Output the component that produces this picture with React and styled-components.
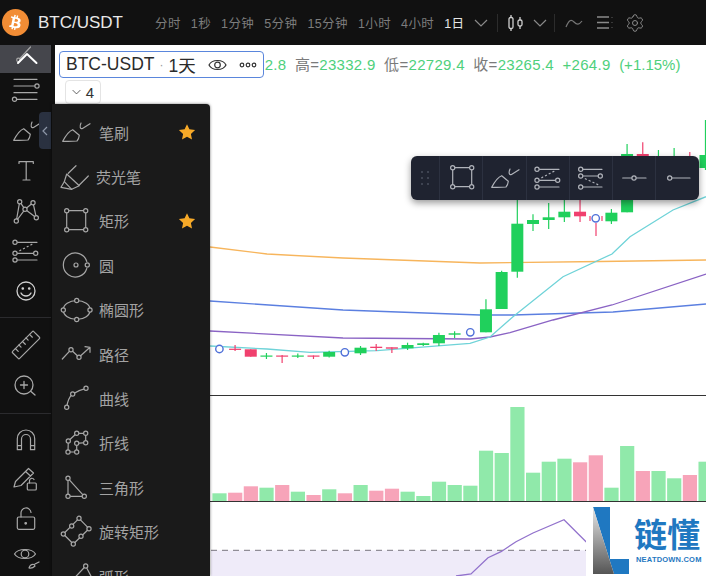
import styled, { createGlobalStyle } from 'styled-components';
import { FaBtc } from 'react-icons/fa';
import { Settings } from 'lucide-react';

const FONT = '"Liberation Sans", "Noto Sans CJK SC", sans-serif';
const GREEN = '#20d05c';
const RED = '#f0406e';

const GlobalStyle = createGlobalStyle`
  html, body { margin: 0; padding: 0; background: #fff; }
  * { box-sizing: border-box; }
`;

// x step shared by candles and volume bars
const stepX = (i) => 219.4 + 15.68 * i;

// [index, bodyTop, bodyBottom, wickTop, wickBottom, up]
const candles = [
  [1, 348.7, 349.9, 345, 351, 0],
  [2, 349.3, 356.7, 349.3, 356.7, 0],
  [3, 355.5, 356.7, 353, 359, 1],
  [4, 355.5, 356.7, 355, 363, 0],
  [5, 355.5, 356.7, 353.5, 358, 1],
  [6, 355.5, 356.7, 355.5, 359, 0],
  [7, 352, 356.7, 350.7, 357.5, 1],
  [9, 347.7, 353.3, 346, 355, 1],
  [10, 346.7, 348, 344, 351, 0],
  [11, 347.3, 348.7, 347.3, 353, 0],
  [12, 345, 348.3, 342.7, 350, 1],
  [13, 343.3, 345, 342.7, 346, 1],
  [14, 335, 343.3, 332.7, 346, 1],
  [15, 333.3, 334.7, 331.3, 338, 1],
  [17, 309.3, 332.3, 299.3, 332.3, 1],
  [18, 272, 309, 270.7, 309, 1],
  [19, 223.7, 271.7, 200, 277.7, 1],
  [20, 220, 224, 214.3, 231, 1],
  [21, 217.3, 220, 203, 229, 1],
  [22, 211.7, 217.3, 200, 222, 1],
  [23, 211.7, 216.3, 198, 222, 0],
  [25, 212.7, 221.3, 209, 224, 1],
  [26, 154, 212.3, 144, 212.3, 1],
  [27, 154, 157, 142.3, 165, 0],
  [28, 170, 175, 150, 180, 1],
  [29, 170, 175, 148, 180, 1],
  [30, 170, 175, 152, 180, 0],
  [31, 155, 168, 120, 170, 1],
];

const markers = [[0, 349], [8, 352.3], [16, 332.3], [24, 218.3]];

const lines = [
  { color: '#f7b55c', points: '210,247 267,254 343,258 480,263 600,261.5 706,260' },
  { color: '#5b7fe0', points: '210,301 343,310 480,315 513,315 613,312 706,304' },
  { color: '#8a63c4', points: '210,331 343,338 470,339 490,337 510,332.7 553,320 612,305 706,274' },
  { color: '#6fd3d8', points: '210,346 267,349 310,352.3 377,350.7 470,343.3 490,337 513,316.7 563,276.7 612,254 630,236.7 673,210 706,196.7' },
];

const volumes = [
  [7.7, 1], [8.3, 0], [14.7, 0], [13.3, 1], [16, 0], [9.3, 1], [6, 0], [11.7, 1],
  [7.7, 0], [16, 1], [10.3, 0], [12.3, 0], [9.3, 1], [5, 1], [19.3, 1], [16, 1],
  [15.3, 1], [50.3, 1], [48, 1], [94, 1], [28.3, 1], [39.3, 1], [42.3, 1], [38.7, 0],
  [45.7, 0], [13.3, 1], [55, 1], [30, 0], [30, 1], [22.7, 1], [26, 0], [39.3, 1],
];

const Page = styled.div`
  width: 706px;
  height: 576px;
  overflow: hidden;
  display: flex;
  flex-direction: column;
  font-family: ${FONT};
`;

const Header = styled.header`
  height: 45px;
  flex: none;
  background: #111;
  display: flex;
  align-items: center;
  padding-left: 2px;
`;

const Logo = styled.div`
  width: 27px;
  height: 27px;
  border-radius: 50%;
  background: #f28d35;
  color: #fff;
  display: flex;
  align-items: center;
  justify-content: center;
  font-size: 15px;
  svg { transform: rotate(12deg); }
`;

const Pair = styled.div`
  margin-left: 9px;
  width: 117px;
  font-size: 17px;
  color: #e8e8e8;
`;

const Tabs = styled.nav`
  display: flex;
  align-items: center;
  gap: 10px;
`;

const Tab = styled.span`
  font-size: 12.5px;
  letter-spacing: 0.4px;
  color: ${(p) => (p.$active ? '#e6e6e6' : '#7d7d7d')};
  white-space: nowrap;
`;

const HeadIcons = styled.div`
  display: flex;
  align-items: center;
  margin-left: 10px;
  color: #8a8a8a;
`;

const Sep = styled.i`
  width: 1px;
  height: 18px;
  background: #2c2c2c;
  margin: 0 ${(p) => p.$right || 10}px 0 ${(p) => p.$left || 10}px;
`;

const Body = styled.div`
  flex: 1;
  min-height: 0;
  display: flex;
  position: relative;
`;

const Sidebar = styled.aside`
  width: 55px;
  flex: none;
  background: #111;
  position: relative;
`;

const ToolGroup = styled.div`
  width: 51px;
  padding: ${(p) => p.$pad || '0'};
  border-bottom: ${(p) => (p.$line ? '1px solid #2b2b2e' : 'none')};
`;

const Tool = styled.div`
  height: ${(p) => p.$h || 40}px;
  display: flex;
  align-items: center;
  justify-content: center;
  background: ${(p) => (p.$active ? '#45464c' : 'transparent')};
  margin-bottom: ${(p) => p.$after || 0}px;
  overflow: visible;
`;

const Collapse = styled.div`
  position: absolute;
  left: 39px;
  top: 67px;
  width: 12px;
  height: 37px;
  background: #2a3140;
  border-radius: 4px 0 0 4px;
  display: flex;
  align-items: center;
  justify-content: center;
`;

const Menu = styled.div`
  position: absolute;
  left: 52px;
  top: 59px;
  bottom: 0;
  width: 158px;
  background: #1a1a1a;
  border-radius: 0 4px 0 0;
  box-shadow: 0 0 3px rgba(0, 0, 0, 0.55);
  padding: 6px 0 0 5px;
  overflow: hidden;
  z-index: 3;
`;

const MenuItem = styled.div`
  height: 44.4px;
  flex: none;
  display: flex;
  align-items: center;
  position: relative;
`;

const MenuLabel = styled.span`
  margin-left: ${(p) => p.$gap ?? 6}px;
  font-size: 15px;
  color: #a3a3a3;
  white-space: nowrap;
`;

const Star = styled.svg`
  position: absolute;
  left: 121px;
  top: 13px;
`;

const Chart = styled.main`
  flex: 1;
  min-width: 0;
  display: flex;
  flex-direction: column;
  position: relative;
  background: #fff;
`;

const Pane = styled.div`
  height: ${(p) => p.$h}px;
  flex: ${(p) => (p.$h ? 'none' : '1')};
  border-bottom: ${(p) => (p.$line ? '1.5px solid #333' : 'none')};
  overflow: hidden;
  svg { display: block; }
`;

const Legend = styled.div`
  position: absolute;
  left: 4px;
  top: 6px;
  display: flex;
  align-items: center;
  white-space: nowrap;
  z-index: 1;
`;

const TitleBox = styled.div`
  width: 205px;
  height: 27px;
  padding: 0 6px;
  background: #fff;
  border: 1.5px solid #5a86dc;
  border-radius: 4px;
  display: flex;
  align-items: center;
  font-size: 17.5px;
  color: #2b2b2b;
  position: relative;
  z-index: 1;
`;

const Dot = styled.span`
  margin: 0 5px;
  font-size: 12px;
  color: #999;
`;

const TitleIcons = styled.span`
  margin-left: auto;
  display: flex;
  align-items: center;
  gap: 12px;
`;

const Values = styled.div`
  display: flex;
  align-items: baseline;
  gap: 8.5px;
  margin-left: -8px;
  margin-top: 1px;
  font-size: 15px;
  line-height: 20px;
  letter-spacing: 0.3px;
`;

const Value = styled.span`
  color: #4ed07c;
  letter-spacing: ${(p) => (p.$tight ? '0' : 'inherit')};
`;

const Key = styled.span`
  color: #7a7a7a;
`;

const Collapsed = styled.div`
  position: absolute;
  left: 10px;
  top: 35px;
  width: 36px;
  height: 24px;
  border: 1px solid #e4e4e4;
  border-radius: 4px;
  background: #fff;
  display: flex;
  align-items: center;
  justify-content: center;
  gap: 5px;
  font-size: 15px;
  color: #333;
`;

const FloatBar = styled.div`
  position: absolute;
  left: 356px;
  top: 111px;
  height: 44px;
  display: flex;
  background: #1f2330;
  border-radius: 6px;
  box-shadow: 0 3px 7px rgba(0, 0, 0, 0.4);
  z-index: 2;
`;

const Handle = styled.div`
  width: 28px;
  display: grid;
  grid-template-columns: 2px 2px;
  grid-auto-rows: 2px;
  gap: 4px;
  align-content: center;
  justify-content: center;
  span { background: #4a4f5c; border-radius: 50%; }
`;

const BarCell = styled.div`
  width: 43.3px;
  border-left: 1px solid #2c3140;
  display: flex;
  align-items: center;
  justify-content: center;
`;

const Watermark = styled.div`
  position: absolute;
  right: 0;
  bottom: 0;
  width: 120px;
  height: 73px;
  background: #fff;
  display: flex;
  padding: 4px 0 2px 7px;
  z-index: 1;
`;

const Brand = styled.div`
  margin-left: 5px;
  display: flex;
  flex-direction: column;
  align-items: flex-start;
  color: #1f78c1;
`;

const BrandName = styled.div`
  margin-top: 11px;
  font-size: 33px;
  line-height: 36px;
  font-weight: 700;
  white-space: nowrap;
`;

const BrandUrl = styled.div`
  margin-left: 2px;
  font-size: 7.5px;
  line-height: 11px;
  font-weight: 700;
  letter-spacing: 0.2px;
  white-space: nowrap;
`;

const Icon = ({ children, color = '#a6a6a6', size = 36, width = 1.2 }) => (
  <svg width={size} height={size} viewBox="0 0 36 36" fill="none" stroke={color} strokeWidth={width} strokeLinecap="round" strokeLinejoin="round" style={{ flex: 'none' }}>
    {children}
  </svg>
);

// small open circle on a drawing tool, bg hides the line behind it
const N = ({ x, y, r = 2.1, bg = '#1a1a1a' }) => <circle cx={x} cy={y} r={r} fill={bg} />;

const BrushIcon = ({ bg, ...p }) => (
  <Icon {...p}>
    <path d="M5.7 27.3C9 21 12 17 15.7 15.7L22.3 21.3C22 24 21 26 20 27C15 27.5 10 27.5 5.7 27.3Z" />
    <path d="M24 9C22.5 12.5 23 15.5 25.5 14.5L33 9.7" />
  </Icon>
);

const RectIcon = ({ bg, ...p }) => (
  <Icon {...p}>
    <rect x="9.7" y="7.7" width="19" height="19" />
    <N x={9.7} y={7.7} bg={bg} /><N x={28.7} y={7.7} bg={bg} /><N x={9.7} y={26.7} bg={bg} /><N x={28.7} y={26.7} bg={bg} />
  </Icon>
);

const ChannelIcon = ({ bg, ...p }) => (
  <Icon {...p}>
    <path d="M7 9.3H29M7 20.3H27.7M7 27H29" />
    <path d="M11.7 17.7L24 11.3" strokeDasharray="1.2 3" />
    <N x={7} y={9.3} bg={bg} /><N x={7} y={20.3} bg={bg} /><N x={27.7} y={20.3} bg={bg} /><N x={7} y={27} bg={bg} />
  </Icon>
);

const FibIcon = ({ bg, ...p }) => (
  <Icon {...p}>
    <path d="M7.7 9.3H29M7.7 16H27.3M7.7 27H29" />
    <path d="M12.3 18.7L25 24.7" strokeDasharray="1.2 3" />
    <N x={7.7} y={9.3} bg={bg} /><N x={7.7} y={16} bg={bg} /><N x={27.3} y={16} bg={bg} /><N x={7.7} y={27} bg={bg} />
  </Icon>
);

const menuIcons = {
  brush: <BrushIcon />,
  marker: (
    <Icon>
      <path d="M19 6.7L11.3 14.3M9.7 15L22.3 26.7L14.7 30.3L4 28.3L7.3 22.7Z" />
      <path d="M7.3 22.7L14.7 30.3M22.3 26L31.3 17" />
    </Icon>
  ),
  rect: <RectIcon />,
  circle: (
    <Icon>
      <path d="M29.8 14.5A12 12 0 1 0 29.8 21.5" />
      <circle cx="19" cy="18" r="2" />
      <N x={30.3} y={18} />
    </Icon>
  ),
  ellipse: (
    <Icon>
      <ellipse cx="19.7" cy="18" rx="13.5" ry="9.5" />
      <N x={19.7} y={8.5} /><N x={19.7} y={27.5} /><N x={6.3} y={18} /><N x={33} y={18} />
    </Icon>
  ),
  path: (
    <Icon>
      <path d="M5.3 23L14 13.7L22 21.3L33 11.3M28 10.7L33 11.3V16.3" />
      <N x={14} y={13.7} /><N x={22} y={21.3} />
    </Icon>
  ),
  curve: (
    <Icon>
      <path d="M9.7 26.3C10.5 20 12 16 15.7 13C20 10 24 8.5 29 7.3" />
      <N x={9.7} y={26.3} /><N x={15.7} y={13} /><N x={29} y={7.3} />
    </Icon>
  ),
  polyline: (
    <Icon>
      <path d="M11 27L11.3 16L19.7 8.3H28.7V17.7L19.7 18.3V27H11" />
      <N x={11} y={27} /><N x={11.3} y={16} /><N x={19.7} y={8.3} /><N x={28.7} y={8.3} /><N x={28.7} y={17.7} /><N x={19.7} y={18.3} /><N x={19.7} y={27} />
    </Icon>
  ),
  triangle: (
    <Icon>
      <path d="M11 9.3V27.3H27.3Z" />
      <N x={11} y={9.3} /><N x={11} y={27.3} /><N x={27.3} y={27.3} />
    </Icon>
  ),
  rotated: (
    <Icon>
      <path d="M22 4.3L6.3 20L16.3 30L32 14.7Z" />
      <N x={22} y={4.3} /><N x={6.3} y={20} /><N x={16.3} y={30} /><N x={32} y={14.7} /><N x={14.7} y={12} /><N x={24} y={22.3} />
    </Icon>
  ),
  arc: (
    <Icon>
      <path d="M8 30L28.7 8L36 22" />
      <N x={28.7} y={8} />
    </Icon>
  ),
};

const menuItems = [
  { label: '笔刷', icon: 'brush', star: true },
  { label: '荧光笔', icon: 'marker', gap: 3 },
  { label: '矩形', icon: 'rect', star: true },
  { label: '圆', icon: 'circle' },
  { label: '椭圆形', icon: 'ellipse' },
  { label: '路径', icon: 'path' },
  { label: '曲线', icon: 'curve' },
  { label: '折线', icon: 'polyline' },
  { label: '三角形', icon: 'triangle' },
  { label: '旋转矩形', icon: 'rotated' },
  { label: '弧形', icon: 'arc' },
];

const tabs = ['分时', '1秒', '1分钟', '5分钟', '15分钟', '1小时', '4小时'];

const Chevron = ({ w = 14, color = '#8a8a8a' }) => (
  <svg width={w} height="8" viewBox="0 0 14 8" fill="none" stroke={color} strokeWidth="1.2">
    <path d="M1 1L7 7L13 1" />
  </svg>
);

const SideIcon = ({ children, ...p }) => <Icon color="#a8a8a8" {...p}>{children}</Icon>;

const MainChart = () => (
  <svg width="651" height="350" viewBox="55 45 651 350">
    {lines.map((l) => (
      <polyline key={l.color} points={l.points} fill="none" stroke={l.color} strokeWidth="1.3" />
    ))}
    {candles.map(([i, top, bottom, wTop, wBottom, up]) => {
      const x = stepX(i);
      const c = up ? GREEN : RED;
      return (
        <g key={i}>
          <line x1={x} x2={x} y1={wTop} y2={wBottom} stroke={c} strokeWidth="1.2" />
          <rect x={x - 6} y={top} width="12" height={bottom - top} fill={c} />
        </g>
      );
    })}
    <path d="M596 223V236M590 216V221M602 216V221" stroke={RED} strokeWidth="1.2" />
    {markers.map(([i, y]) => (
      <circle key={i} cx={stepX(i)} cy={y} r="3.7" fill="#fff" stroke="#4f70d8" strokeWidth="1.4" />
    ))}
  </svg>
);

const VolumeChart = () => (
  <svg width="651" height="105" viewBox="55 396 651 105">
    {volumes.map(([h, up], i) => (
      <rect key={i} x={stepX(i) - 7} y={501 - h} width="14.2" height={h} fill={up ? '#90e9aa' : '#f7a4b9'} />
    ))}
  </svg>
);

const RsiChart = () => (
  <svg width="651" height="74" viewBox="55 502 651 74">
    <rect x="211" y="550.3" width="495" height="26" fill="#efebf9" />
    <line x1="211" x2="706" y1="550.3" y2="550.3" stroke="#77757f" strokeWidth="1" strokeDasharray="6 5" />
    <polyline points="456,576 471,574 488,557.7 501,551.7 516,541.7 533,533 564,519.7 586,541.7 600,552" fill="none" stroke="#9272cc" strokeWidth="1.3" />
  </svg>
);

const App = () => (
  <Page>
    <GlobalStyle />
    <Header>
      <Logo><FaBtc /></Logo>
      <Pair>BTC/USDT</Pair>
      <Tabs>
        {tabs.map((t) => <Tab key={t}>{t}</Tab>)}
        <Tab $active>1日</Tab>
      </Tabs>
      <HeadIcons>
        <Chevron />
        <Sep $left={9} />
        <svg width="15" height="18" viewBox="0 0 15 18" fill="none" stroke="#d0d0d0" strokeWidth="1.3">
          <rect x="1" y="3.5" width="4" height="11" rx="1.5" />
          <path d="M3 1V3.5M3 14.5V17M12 3V6M12 12V15" />
          <rect x="10" y="6" width="4" height="6" rx="1.5" />
        </svg>
        <span style={{ width: 10 }} />
        <Chevron />
        <Sep $left={7} $right={8} />
        <svg width="18" height="10" viewBox="0 0 18 10" fill="none" stroke="#777" strokeWidth="1.2" style={{ marginLeft: 2 }}>
          <path d="M1 9C4 2 6 1 9 4C12 7 14 7 17 3" />
        </svg>
        <span style={{ width: 14 }} />
        <svg width="16" height="13" viewBox="0 0 16 13" fill="none" stroke="#8a8a8a" strokeWidth="1.3">
          <path d="M0 1H12M0 6.5H12M0 12H12M15 1V1.6M15 6.2V6.8M15 11.4V12" />
        </svg>
        <span style={{ width: 12 }} />
        <Settings size={20} strokeWidth={1.2} color="#8a8a8a" />
      </HeadIcons>
    </Header>
    <Body>
      <Sidebar>
        <ToolGroup $pad="0 0 6px" $line>
          <Tool $h={28} $active>
            <Icon size={36} color="#a8a8a8">
              <path d="M22.5 6L11.5 18" />
              <circle cx="10.5" cy="19" r="1.8" />
              <path d="M10 22L19 13L28.5 22" stroke="#fff" strokeWidth="2" />
            </Icon>
          </Tool>
          <Tool $h={30} $after={8}>
            <SideIcon>
              <path d="M6 9.3H29M6 16H27M6 22.7H29M8.5 29.3H29" />
              <N x={29} y={16} bg="#111" /><N x={6.5} y={29.3} bg="#111" />
            </SideIcon>
          </Tool>
          <Tool><BrushIcon color="#a8a8a8" /></Tool>
          <Tool>
            <SideIcon>
              <path d="M11 10.5V8.7H25.3V10.5M18.2 8.7V27M15 27H22" />
            </SideIcon>
          </Tool>
          <Tool>
            <SideIcon>
              <path d="M11.7 8.7L8.3 28M11.7 8.7L17 16.3L28.3 24.7L25 9.7L17 16.3L8.3 28" />
              <N x={11.7} y={8.7} bg="#111" /><N x={25} y={9.7} bg="#111" /><N x={17} y={16.3} bg="#111" /><N x={8.3} y={28} bg="#111" /><N x={28.3} y={24.7} bg="#111" />
            </SideIcon>
          </Tool>
          <Tool><ChannelIcon color="#a8a8a8" bg="#111" /></Tool>
          <Tool>
            <Icon color="#cfcfcf" width={1.3}>
              <circle cx="18" cy="18" r="9" />
              <path d="M13 20C15 24 21 24 23 20" />
              <circle cx="14.8" cy="15.5" r="0.7" fill="#cfcfcf" />
              <circle cx="21.2" cy="15.5" r="0.7" fill="#cfcfcf" />
            </Icon>
          </Tool>
        </ToolGroup>
        <ToolGroup $pad="7px 0 8px" $line>
          <Tool>
            <SideIcon>
              <g transform="rotate(-45 18 18)">
                <rect x="3" y="13" width="30" height="10" rx="1" />
                <path d="M8 13V17M13 13V16M18 13V17M23 13V16M28 13V17" />
              </g>
            </SideIcon>
          </Tool>
          <Tool>
            <SideIcon width={1.3}>
              <circle cx="16" cy="18" r="9" />
              <path d="M16 14.5V21.5M12.5 18H19.5M23 24.5L27 28" />
            </SideIcon>
          </Tool>
        </ToolGroup>
        <ToolGroup $pad="6px 0 0">
          <Tool>
            <SideIcon>
              <path d="M9.3 27.7V16.7A8.7 8.7 0 0 1 26.7 16.7V27.7H22.5V17A4.5 4.5 0 0 0 13.5 17V27.7ZM9.3 23.7H13.5M22.5 23.7H26.7" />
            </SideIcon>
          </Tool>
          <Tool>
            <SideIcon>
              <path d="M6 25L7.5 19.5L20.5 6.5L25.5 11L13 23.5L6 25ZM17.5 9.5L22.5 14" />
              <rect x="19.3" y="21" width="9" height="7" rx="1" />
              <path d="M21.5 21V18.5A2.4 2.4 0 0 1 26 17.5" />
            </SideIcon>
          </Tool>
          <Tool>
            <SideIcon width={1.2}>
              <rect x="9.3" y="15" width="17.4" height="12.3" rx="1.5" />
              <path d="M13 15V11.5A5 5 0 0 1 23 10.5" />
              <circle cx="17.7" cy="21.3" r="0.8" fill="#a8a8a8" />
            </SideIcon>
          </Tool>
          <Tool $h={32}>
            <SideIcon width={1.2}>
              <path d="M6.5 16C10 10 24 10 27.5 16C24 22 10 22 6.5 16Z" />
              <circle cx="17" cy="16" r="3.8" />
              <path d="M21 30C22 27 24 26 26 26.5L27 28C25 30 23 30.5 21 30ZM27 26L31 24" />
            </SideIcon>
          </Tool>
        </ToolGroup>
        <Collapse>
          <svg width="6" height="10" viewBox="0 0 6 10" fill="none" stroke="#8e97a8" strokeWidth="1.2">
            <path d="M5 1L1 5L5 9" />
          </svg>
        </Collapse>
      </Sidebar>
      <Menu>
        {menuItems.map((m) => (
          <MenuItem key={m.label}>
            {menuIcons[m.icon]}
            <MenuLabel $gap={m.gap}>{m.label}</MenuLabel>
            {m.star && (
              <Star width="18" height="18" viewBox="0 0 24 24" fill="#f6a928">
                <path d="M12 1.5L15.2 8.4L22.8 9.3L17.2 14.5L18.7 22L12 18.2L5.3 22L6.8 14.5L1.2 9.3L8.8 8.4Z" />
              </Star>
            )}
          </MenuItem>
        ))}
      </Menu>
      <Chart>
        <Pane $h={351} $line><MainChart /></Pane>
        <Pane $h={106} $line><VolumeChart /></Pane>
        <Pane><RsiChart /></Pane>
        <Legend>
          <TitleBox>
            BTC-USDT<Dot>·</Dot>1天
            <TitleIcons>
              <svg width="19" height="14" viewBox="0 0 19 14" fill="none" stroke="#333" strokeWidth="1.2">
                <path d="M1 7C4 1 15 1 18 7C15 13 4 13 1 7Z" />
                <circle cx="9.5" cy="7" r="2.8" />
              </svg>
              <svg width="18" height="6" viewBox="0 0 18 6" fill="none" stroke="#333" strokeWidth="1.2">
                <circle cx="3" cy="3" r="1.8" /><circle cx="9" cy="3" r="1.8" /><circle cx="15" cy="3" r="1.8" />
              </svg>
            </TitleIcons>
          </TitleBox>
          <Values>
            <Value>92.8</Value>
            <span><Key>高=</Key><Value>23332.9</Value></span>
            <span><Key>低=</Key><Value>22729.4</Value></span>
            <span><Key>收=</Key><Value>23265.4</Value></span>
            <Value>+264.9</Value>
            <Value $tight>(+1.15%)</Value>
          </Values>
        </Legend>
        <Collapsed>
          <Chevron w={9} color="#333" />4
        </Collapsed>
        <FloatBar>
          <Handle>{[0, 1, 2, 3, 4, 5].map((i) => <span key={i} />)}</Handle>
          <BarCell><RectIcon bg="#1f2330" color="#b0b3ba" /></BarCell>
          <BarCell><BrushIcon color="#b0b3ba" /></BarCell>
          <BarCell><ChannelIcon bg="#1f2330" color="#b0b3ba" /></BarCell>
          <BarCell><FibIcon bg="#1f2330" color="#b0b3ba" /></BarCell>
          <BarCell>
            <Icon color="#b0b3ba">
              <path d="M6.7 18H30" />
              <N x={18} y={18} bg="#1f2330" />
            </Icon>
          </BarCell>
          <BarCell>
            <Icon color="#b0b3ba">
              <path d="M9.7 18H30" />
              <N x={9.7} y={18} bg="#1f2330" />
            </Icon>
          </BarCell>
        </FloatBar>
        <Watermark>
          <svg width="36" height="67" viewBox="0 0 36 67" style={{ flex: 'none' }}>
            <defs>
              <linearGradient id="wedge" x1="0" y1="0" x2="0" y2="1">
                <stop offset="0" stopColor="#e6e6e6" />
                <stop offset="1" stopColor="#555" />
              </linearGradient>
            </defs>
            <path d="M0 0H17V52H36V67H21Z" fill="#1f78c1" />
            <path d="M0 0L21 67H0Z" fill="url(#wedge)" />
          </svg>
          <Brand>
            <BrandName>链懂</BrandName>
            <BrandUrl>NEATDOWN.COM</BrandUrl>
          </Brand>
        </Watermark>
      </Chart>
    </Body>
  </Page>
);

export default App;
